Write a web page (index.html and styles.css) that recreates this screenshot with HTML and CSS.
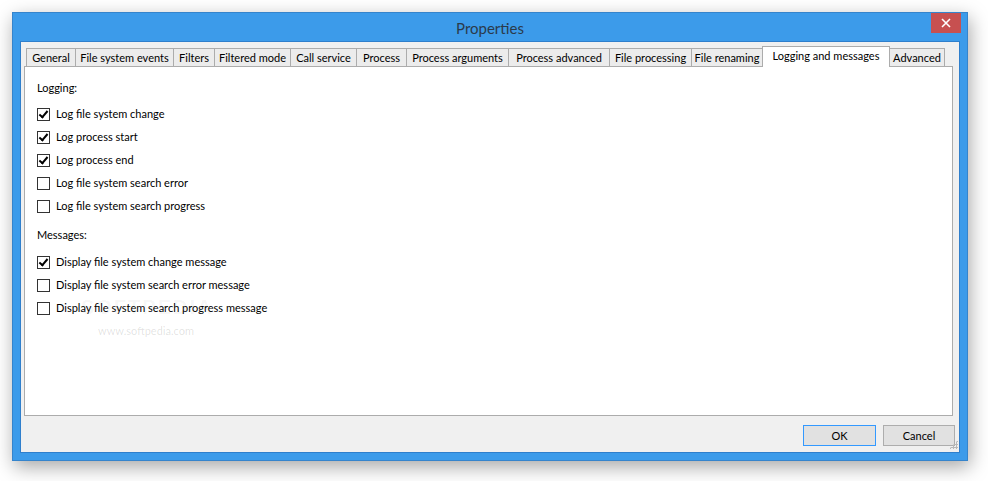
FILE: index.html
```html
<!DOCTYPE html>
<html>
<head>
<meta charset="utf-8">
<link rel="stylesheet" href="styles.css">
</head>
<body>
<div class="window">
  <div class="titlebar">
    <span class="title">Properties</span>
    <div class="close"><svg width="10" height="10" viewBox="0 0 10 10"><path d="M1 1L9 9M9 1L1 9" stroke="#fff" stroke-width="1.6"/></svg></div>
  </div>
  <div class="client">
    <div class="tabs">
      <div class="tab" style="width:49px">General</div>
      <div class="tab" style="width:98px">File system events</div>
      <div class="tab" style="width:41px">Filters</div>
      <div class="tab" style="width:76px">Filtered mode</div>
      <div class="tab" style="width:66px">Call service</div>
      <div class="tab" style="width:50px">Process</div>
      <div class="tab" style="width:102px">Process arguments</div>
      <div class="tab" style="width:101px">Process advanced</div>
      <div class="tab" style="width:82px">File processing</div>
      <div class="tab" style="width:71px">File renaming</div>
      <div class="tab active" style="width:128px">Logging and messages</div>
      <div class="tab last" style="width:55px">Advanced</div>
    </div>
    <div class="panel">
      <div class="group-label">Logging:</div>
      <div class="check"><span class="box on"></span>Log file system change</div>
      <div class="check"><span class="box on"></span>Log process start</div>
      <div class="check"><span class="box on"></span>Log process end</div>
      <div class="check"><span class="box"></span>Log file system search error</div>
      <div class="check"><span class="box"></span>Log file system search progress</div>
      <div class="group-label second">Messages:</div>
      <div class="check"><span class="box on"></span>Display file system change message</div>
      <div class="check"><span class="box"></span>Display file system search error message</div>
      <div class="check"><span class="box"></span>Display file system search progress message</div>
      <div class="watermark">SOFTPEDIA</div>
      <div class="watermark-url">www.softpedia.com</div>
    </div>
    <div class="buttons">
      <div class="btn default">OK</div>
      <div class="btn cancel">Cancel</div>
      <div class="grip"></div>
    </div>
  </div>
</div>
</body>
</html>
```
FILE: styles.css
```css
html, body {
  margin: 0;
  padding: 0;
  background: #ffffff;
}
body {
  width: 988px;
  height: 481px;
  overflow: hidden;
  padding: 12px 0 0 12px;
  box-sizing: border-box;
  font-family: Lato, "Liberation Sans", Arial, sans-serif;
  font-size: 11px;
  color: #000;
}
.window {
  width: 956px;
  height: 449px;
  box-sizing: border-box;
  background: #3c9bea;
  border: 1px solid #3584cc;
  padding: 0 7px 7px 7px;
  display: flex;
  flex-direction: column;
  box-shadow: 2px 6px 18px rgba(0,0,0,0.35);
}
.titlebar {
  height: 28px;
  position: relative;
  display: flex;
  align-items: center;
  justify-content: center;
}
.title {
  font-family: Lato, "Liberation Sans", Arial, sans-serif;
  font-size: 15px;
  color: #2b3a4a;
  padding-top: 1px;
}
.close {
  position: absolute;
  right: -1px;
  top: 0;
  width: 30px;
  height: 20px;
  background: #c75050;
  display: flex;
  align-items: center;
  justify-content: center;
}
.client {
  flex: 1;
  background: #f0f0f0;
  border: 1px solid #2f7fcc;
  padding: 6px 6px 0 3px;
  display: flex;
  flex-direction: column;
}
.tabs {
  display: flex;
  height: 18px;
  padding-left: 2px;
  align-items: flex-end;
  position: relative;
  z-index: 1;
}
.tab {
  height: 18px;
  box-sizing: border-box;
  border-left: 1px solid #acacac;
  border-top: 1px solid #acacac;
  background: #ececec;
  text-align: center;
  line-height: 17px;
  white-space: nowrap;
  flex: none;
}
.tab.last {
  border-right: 1px solid #acacac;
}
.tab.active {
  height: 21px;
  background: #fff;
  border-right: 1px solid #acacac;
  line-height: 17px;
  position: relative;
  top: 1px;
  z-index: 2;
}
.tab.active + .tab {
  border-left: none;
}
.panel {
  height: 350px;
  box-sizing: border-box;
  background: #fff;
  border: 1px solid #acacac;
  padding: 13px 0 0 12px;
  position: relative;
}
.group-label {
  height: 16px;
  line-height: 16px;
  margin-bottom: 10px;
}
.group-label.second {
  margin-top: 13px;
  margin-bottom: 11px;
}
.check {
  height: 16px;
  line-height: 16px;
  margin-bottom: 7px;
  display: flex;
  align-items: center;
}
.box {
  width: 13px;
  height: 13px;
  box-sizing: border-box;
  border: 1px solid #333;
  background: #fff;
  margin-right: 6px;
  position: relative;
  flex: none;
}
.box.on::after {
  content: "";
  position: absolute;
  left: 3px;
  top: 0px;
  width: 3px;
  height: 7px;
  border: solid #000;
  border-width: 0 2px 2px 0;
  transform: rotate(40deg);
}
.watermark {
  position: absolute;
  left: 56px;
  top: 229px;
  font-family: "Liberation Sans", Arial, sans-serif;
  font-size: 20px;
  letter-spacing: 2px;
  font-weight: bold;
  color: rgba(0,0,0,0.045);
}
.watermark-url {
  position: absolute;
  left: 73px;
  top: 257px;
  font-size: 11px;
  color: rgba(0,0,0,0.12);
}
.buttons {
  display: flex;
  justify-content: flex-end;
  padding: 9px 0 0 0;
  margin-right: -2px;
  gap: 7px;
  position: relative;
}
.btn {
  width: 73px;
  height: 21px;
  box-sizing: border-box;
  border: 1px solid #adadad;
  background: #e1e1e1;
  text-align: center;
  line-height: 19px;
}
.btn.cancel {
  width: 72px;
}
.btn.default {
  border-color: #3399ff;
}
.grip {
  position: absolute;
  right: -3px;
  top: 24px;
  width: 9px;
  height: 9px;
  background-image: radial-gradient(circle, #b8b8b8 1px, transparent 1.2px);
  background-size: 3px 3px;
  clip-path: polygon(100% 0, 100% 100%, 0 100%);
}
```
